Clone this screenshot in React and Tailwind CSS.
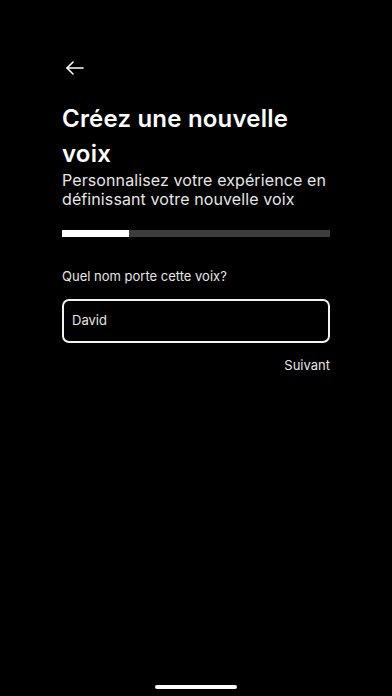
import React from "react";

export default function App() {
  return (
    <div className="w-[392px] h-[696px] bg-black text-white overflow-hidden flex flex-col" style={{ fontFamily: "Inter, 'Noto Sans', sans-serif" }}>
      <div className="px-[62px] flex flex-col">
        <div className="pt-[60px] h-[90px]">
          <svg width="20" height="16" viewBox="0 0 20 16" className="ml-[3px]" fill="none" stroke="white" strokeWidth="1.6" strokeLinecap="round" strokeLinejoin="round">
            <path d="M18 8H2" />
            <path d="M8 2L2 8l6 6" />
          </svg>
        </div>
        <h1 className="text-[24px] leading-[35px] font-semibold tracking-[0.2px] mt-[11px]">
          Créez une nouvelle voix
        </h1>
        <p className="text-[16px] leading-[19px] text-[#e6e6e6] tracking-[0.1px]">
          Personnalisez votre expérience en définissant votre nouvelle voix
        </p>
        <div className="mt-[21px] h-[7px] bg-[#3d3d3d] flex">
          <div className="w-[67px] h-full bg-white" />
        </div>
        <div className="mt-[31px] text-[13px] leading-[16px] text-[#e6e6e6]">Quel nom porte cette voix?</div>
        <div className="mt-[15px] h-[44px] rounded-[7px] border-2 border-[#f2f2f2] flex items-center px-[8px] text-[13px] text-[#e6e6e6]">
          David
        </div>
        <div className="mt-[14px] text-right text-[13px] leading-[16px] text-[#e6e6e6]">Suivant</div>
      </div>
      <div className="flex-1" />
      <div className="flex justify-center pb-[7px]">
        <div className="w-[82px] h-[4px] rounded-full bg-white" />
      </div>
    </div>
  );
}
